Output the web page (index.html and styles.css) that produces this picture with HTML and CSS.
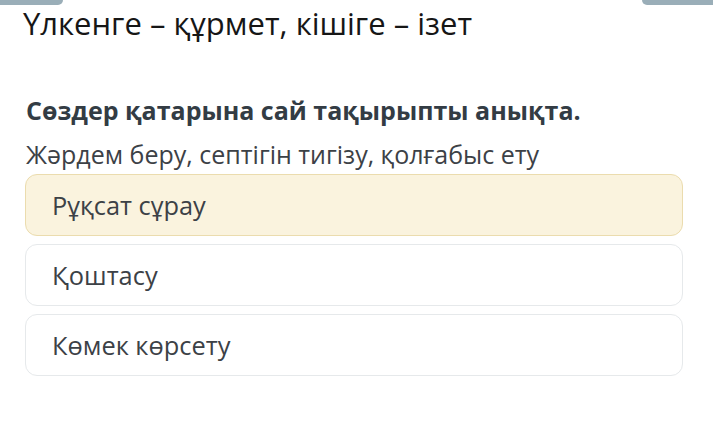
FILE: index.html
```html
<!DOCTYPE html>
<html lang="kk">
<head>
<meta charset="utf-8">
<link rel="stylesheet" href="styles.css">
</head>
<body>
<div class="page">
  <div class="tabs">
    <span class="tab tab-left"></span>
    <span class="tab tab-right"></span>
  </div>
  <h1 class="title">Үлкенге – құрмет, кішіге – ізет</h1>
  <h2 class="question">Сөздер қатарына сай тақырыпты анықта.</h2>
  <p class="prompt">Жәрдем беру, септігін тигізу, қолғабыс ету</p>
  <div class="options">
    <div class="option option-selected">Рұқсат сұрау</div>
    <div class="option">Қоштасу</div>
    <div class="option">Көмек көрсету</div>
  </div>
</div>
</body>
</html>
```
FILE: styles.css
```css
html, body {
  margin: 0;
  padding: 0;
  background: #ffffff;
}
body {
  font-family: "Open Sans", "Noto Sans", sans-serif;
  width: 713px;
  height: 427px;
  overflow: hidden;
}
.page {
  display: flex;
  flex-direction: column;
}
.tabs {
  display: flex;
  justify-content: space-between;
  height: 5px;
}
.tab {
  display: block;
  height: 5px;
  background: #9aaeb8;
}
.tab-left {
  width: 63px;
  border-bottom-right-radius: 6px;
}
.tab-right {
  width: 71px;
  border-bottom-left-radius: 6px;
}
.title {
  margin: 0 0 0 23px;
  font-weight: 400;
  font-size: 31px;
  line-height: 36px;
  color: #161616;
}
.question {
  margin: 54px 0 0 26px;
  font-weight: 700;
  font-size: 25px;
  line-height: 30px;
  color: #333c44;
}
.prompt {
  margin: 14px 0 0 26px;
  font-size: 25px;
  line-height: 30px;
  color: #3c4146;
}
.options {
  display: flex;
  flex-direction: column;
  gap: 8px;
  margin: 5px 30px 0 25px;
}
.option {
  box-sizing: border-box;
  height: 62px;
  border: 1px solid #e6e9eb;
  border-radius: 12px;
  padding-left: 26px;
  display: flex;
  align-items: center;
  font-size: 25.4px;
  color: #3c4146;
}
.option-selected {
  background: #faf3de;
  border-color: #ebdcae;
}
```
